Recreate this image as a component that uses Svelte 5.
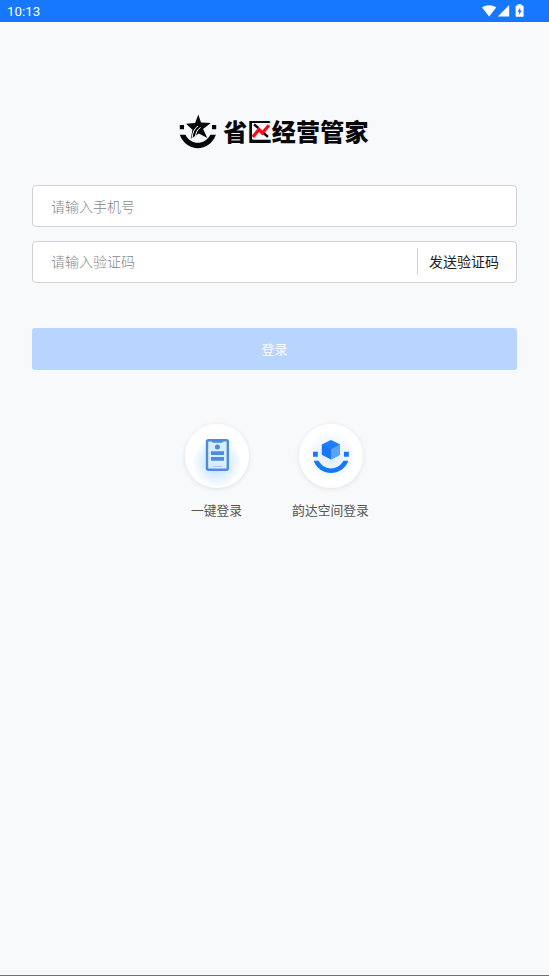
<script lang="ts">
    let phone = $state('');
    let code = $state('');
</script>

<div class="screen">
    <header class="status">
        <span class="time">10:13</span>
        <svg class="status-icons" width="42" height="14" viewBox="0 0 42 14" fill="#fff">
            <path d="M0 3.6C4 .4 10.2.4 14.2 3.6L7.1 12.4Z" />
            <path d="M27.2 1V12.4H15.8Z" />
            <path fill-rule="evenodd" d="M35.7.2h3.8v1.4h1.2q.9 0 .9.9v9.4q0 .9-.9.9h-6.200q-.9 0-.9-.9V2.500q0-.9.9-.9h1.200zM38.200 3.700l-2.700 4h1.600v3l2.700-4.200h-1.600z" />
        </svg>
    </header>

    <main>
        <h1 class="logo">
            <svg class="mark" width="38" height="36" viewBox="0 0 38 36">
                <path fill="#08080c" d="M19.300.6l2.700 8 9.800.5-7.700 6 4.200 9-8.400-4.700-8.100 5.600 1.600-9.200-6.300-6 9-.9z" />
                <path fill="none" stroke="#f8f9fb" stroke-width="1" d="M19 12Q13.500 15.500 13 25M21.500 13.500Q16.500 16.500 16.200 25" />
                <path fill="#08080c" d="M.8 11h4.200v4.200H.8zM33 11h4.200v4.200H33z" />
                <path fill="#08080c" d="M.8 20.700h5.600C12 31.400 25.600 31.400 31.300 20.700h5.600C30.500 38.600 7.200 38.600.8 20.700z" />
            </svg>
            <span class="word">省<span class="district">区<svg width="18" height="16" viewBox="0 0 18 16">
                <path fill="#f8f9fb" d="M0 0H18V16H0z" />
                <path fill="none" stroke="#08080c" stroke-width="2.400" d="M2 1.500l4.500 3.500M11.500 10l4.500 3.800" />
                <path fill="none" stroke="#f20d16" stroke-width="3.200" d="M.8 14L7 6.500L10.300 10L17 2.300" />
            </svg></span>经营管家</span>
        </h1>

        <form onsubmit={(e) => e.preventDefault()}>
            <div class="field">
                <input type="tel" placeholder="请输入手机号" bind:value={phone} />
            </div>
            <div class="field">
                <input type="text" placeholder="请输入验证码" bind:value={code} />
                <button class="send" type="button">发送验证码</button>
            </div>
            <button class="submit" type="submit">登录</button>
        </form>

        <div class="others">
            <div class="other">
                <div class="circle phone">
                    <svg width="40" height="44" viewBox="0 0 40 44">
                        <rect x="10" y="6.200" width="20.800" height="29.600" rx="1.500" fill="#dcecff" stroke="#4a8ddc" stroke-width="2.400" />
                        <path fill="#4a8ddc" d="M14.500 5.200h12v1.500q0 2-2 2h-8q-2 0-2-2z" />
                        <circle cx="20.400" cy="13" r="2.500" fill="#4a8ddc" />
                        <path fill="#4a8ddc" d="M14 17.200h13v3.800H14zM14 23h13v3.800H14z" />
                        <path stroke="#a6c8f2" stroke-width="1" d="M16 32.500h9" />
                    </svg>
                </div>
                <span>一键登录</span>
            </div>
            <div class="other">
                <div class="circle">
                    <svg width="40" height="44" viewBox="0 0 40 44">
                        <path fill="#1677fa" d="M20 6l9 4.500v10.200L20 25.600l-9.200-4.900V10.500z" />
                        <path fill="#4b98ff" d="M10.800 10.500L20 6l9 4.500L20 15.300z" opacity=".2" />
                        <path fill="#5ca2ff" d="M20 15.300l9-4.800v10.200L20 25.600z" />
                        <path fill="#1677fa" d="M2 17.700h4.800v5H2zM33 17.700h4.800v5H33z" />
                        <path fill="#1677fa" d="M2.700 26.800h5C13 37 27 37 32.400 26.800h5C31 43.200 9 43.200 2.700 26.800z" />
                    </svg>
                </div>
                <span>韵达空间登录</span>
            </div>
        </div>
    </main>
</div>

<style>
    :global(body) {
        background: #f8f9fb;
    }
    .screen {
        box-sizing: border-box;
        height: 976px;
        border-bottom: 1px solid #707174;
        background: #f8f9fb;
        font-family: "Noto Sans CJK SC", sans-serif;
    }
    .status {
        box-sizing: border-box;
        height: 22px;
        padding: 0 25px 0 7px;
        display: flex;
        align-items: center;
        justify-content: space-between;
        background: #1677ff;
        color: #fff;
    }
    .time {
        padding-top: 1px;
        font: 400 13.3px/22px Roboto, sans-serif;
    }
    .status-icons {
        margin-bottom: 1px;
    }
    main {
        padding: 92px 32px 0;
    }
    .logo {
        margin: 0;
        height: 36px;
        padding-right: 1px;
        display: flex;
        justify-content: center;
        gap: 6px;
        color: #08080c;
    }
    .word {
        font-size: 24px;
        font-weight: 900;
        line-height: 34px;
        letter-spacing: 0.25px;
        white-space: nowrap;
    }
    .district {
        position: relative;
    }
    .district svg {
        position: absolute;
        left: 4.5px;
        top: 10px;
    }
    form {
        padding-top: 35px;
    }
    .field {
        box-sizing: border-box;
        height: 42px;
        margin-bottom: 13.5px;
        display: flex;
        align-items: center;
        border: 1.5px solid #d1d1d6;
        border-radius: 4px;
        background: #fff;
    }
    input {
        flex: 1;
        min-width: 0;
        height: 36px;
        padding: 0 18px 1px;
        border: 0;
        outline: 0;
        background: none;
        font: 300 14px "Noto Sans CJK SC", sans-serif;
    }
    input::placeholder {
        color: #858585;
        opacity: 1;
    }
    button {
        padding: 0;
        border: 0;
        font-family: inherit;
    }
    .send {
        width: 99px;
        height: 27px;
        padding: 0 6px 2px 0;
        border-left: 1px solid #d1d1d6;
        background: none;
        color: #222;
        font-size: 14px;
    }
    .submit {
        width: 100%;
        height: 42px;
        margin-top: 32px;
        padding-bottom: 2px;
        border-radius: 3px;
        background: #b8d5ff;
        color: #fff;
        font-size: 13px;
    }
    .others {
        padding: 54px 2px 0 0;
        display: flex;
        justify-content: center;
        gap: 37px;
    }
    .other {
        width: 77px;
        display: flex;
        flex-direction: column;
        align-items: center;
        gap: 12px;
        color: #555;
        font-size: 12.8px;
        line-height: 20px;
        white-space: nowrap;
    }
    .circle {
        width: 64px;
        height: 64px;
        display: flex;
        align-items: center;
        justify-content: center;
        border-radius: 50%;
        background: radial-gradient(circle, #e2f0ff 15%, #fff 55%);
        box-shadow: 0 1px 5px rgba(60, 60, 60, 0.12);
    }
    .circle.phone {
        background: radial-gradient(circle at 50% 60%, #c5e2ff 12%, #fff 50%);
    }
</style>
